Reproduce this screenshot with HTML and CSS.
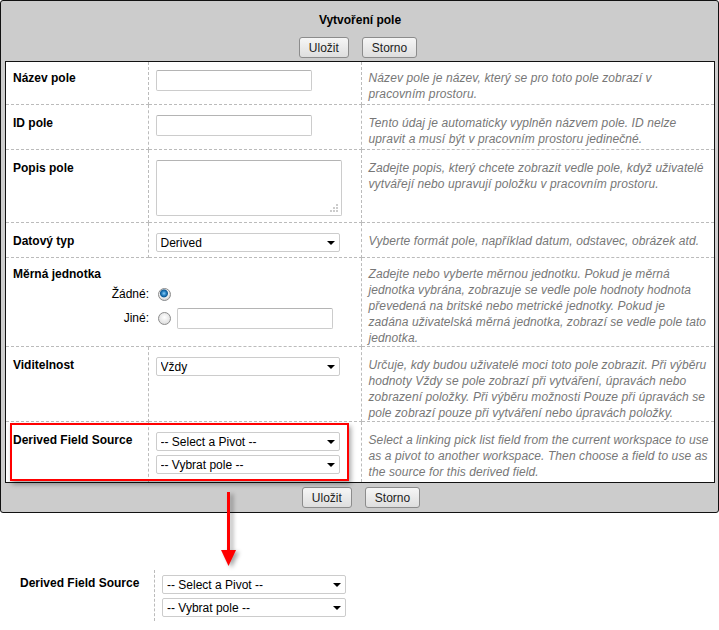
FILE: index.html
```html
<!DOCTYPE html>
<html lang="cs">
<head>
  <meta charset="UTF-8" />
  <title>Vytvoření pole</title>
  <link rel="stylesheet" href="styles.css">
</head>
<body>

  <div class="panel">
    <div class="panel-title">Vytvoření pole</div>
    <div class="actions">
      <button>Uložit</button>
      <button>Storno</button>
    </div>

    <div class="sheet">
      <table class="fields">
        <colgroup>
          <col class="col-label">
          <col class="col-input">
          <col class="col-help">
        </colgroup>
        <tr class="first">
          <td class="label">Název pole</td>
          <td><input type="text" class="text-input"></td>
          <td class="help">Název pole je název, který se pro toto pole zobrazí v<br>pracovním prostoru.</td>
        </tr>
        <tr>
          <td class="label">ID pole</td>
          <td><input type="text" class="text-input"></td>
          <td class="help">Tento údaj je automaticky vyplněn názvem pole. ID nelze<br>upravit a musí být v pracovním prostoru jedinečné.</td>
        </tr>
        <tr>
          <td class="label">Popis pole</td>
          <td><textarea class="text-area"></textarea></td>
          <td class="help">Zadejte popis, který chcete zobrazit vedle pole, když uživatelé<br>vytvářejí nebo upravují položku v pracovním prostoru.</td>
        </tr>
        <tr>
          <td class="label">Datový typ</td>
          <td><span class="select-wrap"><select><option>Derived</option></select></span></td>
          <td class="help">Vyberte formát pole, například datum, odstavec, obrázek atd.</td>
        </tr>
        <tr class="units-row">
          <td colspan="2">
            <div class="label">Měrná jednotka</div>
            <div class="units">
              <span class="unit-name">Žádné:</span>
              <input type="radio" name="unit" class="radio" checked>
              <span></span>
              <span class="unit-name">Jiné:</span>
              <input type="radio" name="unit" class="radio">
              <input type="text" class="text-input">
            </div>
          </td>
          <td class="help">Zadejte nebo vyberte měrnou jednotku. Pokud je měrná<br>jednotka vybrána, zobrazuje se vedle pole hodnoty hodnota<br>převedená na britské nebo metrické jednotky. Pokud je<br>zadána uživatelská měrná jednotka, zobrazí se vedle pole tato<br>jednotka.</td>
        </tr>
        <tr class="tight">
          <td class="label">Viditelnost</td>
          <td><span class="select-wrap"><select><option>Vždy</option></select></span></td>
          <td class="help">Určuje, kdy budou uživatelé moci toto pole zobrazit. Při výběru<br>hodnoty Vždy se pole zobrazí při vytváření, úpravách nebo<br>zobrazení položky. Při výběru možnosti Pouze při úpravách se<br>pole zobrazí pouze při vytváření nebo úpravách položky.</td>
        </tr>
        <tr>
          <td class="label">Derived Field Source</td>
          <td>
            <span class="select-wrap"><select><option>-- Select a Pivot --</option></select></span>
            <span class="select-wrap second"><select><option>-- Vybrat pole --</option></select></span>
          </td>
          <td class="help">Select a linking pick list field from the current workspace to use<br>as a pivot to another workspace. Then choose a field to use as<br>the source for this derived field.</td>
        </tr>
      </table>
    </div>

    <div class="actions bottom">
      <button>Uložit</button>
      <button>Storno</button>
    </div>

    <div class="highlight"></div>

    <svg class="arrow" width="20" height="80" viewBox="0 0 20 80">
      <line x1="7.5" y1="0" x2="7.5" y2="60" stroke="#f00" stroke-width="3" />
      <polygon points="0,58 15,58 7.5,74" fill="#f00" />
    </svg>
  </div>

  <div class="detail">
    <div class="detail-label">Derived Field Source</div>
    <div class="detail-inputs">
      <span class="select-wrap"><select><option>-- Select a Pivot --</option></select></span>
      <span class="select-wrap second"><select><option>-- Vybrat pole --</option></select></span>
    </div>
  </div>

</body>
</html>
```

FILE: styles.css
```css
body {
  margin: 0;
  background: #fff;
  color: #000;
  font-family: "Liberation Sans", Arial, sans-serif;
  font-size: 12px;
  line-height: 16px;
}

.panel {
  position: relative;
  box-sizing: border-box;
  width: 719px;
  background: #cccccc;
  border: 1px solid #111;
  border-radius: 3px;
  padding: 0 3px 4px 4px;
}

.panel-title {
  padding-top: 11px;
  text-align: center;
  font-weight: bold;
}

.actions {
  display: flex;
  justify-content: center;
  gap: 13px;
  margin-top: 9px;
  padding-right: 4px;
}

.actions.bottom {
  margin-top: 4px;
  padding-right: 0;
  padding-left: 2px;
}

.actions button {
  height: 21px;
  padding: 0 9px;
  font-family: "Liberation Sans", Arial, sans-serif;
  font-size: 12px;
  color: #222;
  background: linear-gradient(#f6f6f6, #dedede);
  border: 1px solid #8c8c8c;
  border-radius: 3px;
}

.sheet {
  margin-top: 3px;
  background: #fff;
  border: 1px solid #111;
}

.fields {
  width: 100%;
  border-collapse: collapse;
  table-layout: fixed;
}

.col-label { width: 142px; }
.col-input { width: 213px; }
.col-help { width: 353px; }

.fields td {
  vertical-align: top;
  padding: 10px 0 2px 7px;
  border-right: 1px dashed #bbb;
  border-bottom: 1px dashed #bbb;
}

.fields td:last-child {
  border-right: none;
}

.fields tr:last-child td {
  border-bottom: none;
}

.fields tr.first td {
  padding-top: 8px;
}

.fields tr.units-row td {
  padding-top: 8px;
  padding-bottom: 0;
}

.fields tr.tight td {
  padding-bottom: 0;
}

.label {
  font-weight: bold;
}

.help {
  font-style: italic;
  color: #777;
  letter-spacing: 0.1px;
  white-space: nowrap;
  overflow: hidden;
}

.text-input {
  box-sizing: border-box;
  width: 156px;
  height: 21px;
  margin: 0;
  border: 1px solid #ccc;
  border-top-color: #b4b4b4;
  border-radius: 2px;
  display: block;
}

.text-area {
  box-sizing: border-box;
  display: block;
  width: 186px;
  height: 56px;
  margin: 0 0 4px;
  border: 1px solid #ccc;
  border-top-color: #b4b4b4;
  border-radius: 2px;
  resize: none;
  /* dotted resize grip */
  background-color: #fff;
  background-image:
    radial-gradient(circle, #999 45%, transparent 55%),
    radial-gradient(circle, #999 45%, transparent 55%),
    radial-gradient(circle, #999 45%, transparent 55%),
    radial-gradient(circle, #999 45%, transparent 55%),
    radial-gradient(circle, #999 45%, transparent 55%),
    radial-gradient(circle, #999 45%, transparent 55%);
  background-size: 2px 2px;
  background-repeat: no-repeat;
  background-position:
    right 3px bottom 3px,
    right 6px bottom 3px,
    right 9px bottom 3px,
    right 3px bottom 6px,
    right 6px bottom 6px,
    right 3px bottom 9px;
}

.select-wrap {
  position: relative;
  display: block;
  width: 184px;
  margin-bottom: 3px;
}

.select-wrap.second {
  margin-top: 4px;
  margin-bottom: 0;
}

.select-wrap::after {
  content: "";
  position: absolute;
  right: 5px;
  top: 8px;
  border-left: 4px solid transparent;
  border-right: 4px solid transparent;
  border-top: 4px solid #000;
  pointer-events: none;
}

.select-wrap select {
  -webkit-appearance: none;
  appearance: none;
  box-sizing: border-box;
  display: block;
  width: 184px;
  height: 19px;
  margin: 0;
  padding: 0 0 0 4px;
  font-family: "Liberation Sans", Arial, sans-serif;
  font-size: 12px;
  color: #000;
  background: #fff;
  border: 1px solid #ccc;
  border-radius: 2px;
}

.units {
  display: grid;
  grid-template-columns: 136px 28px 156px;
  grid-auto-rows: 22px;
  row-gap: 2px;
  align-items: center;
  margin-top: 1px;
}

.unit-name {
  text-align: right;
}

.radio {
  -webkit-appearance: none;
  appearance: none;
  width: 13px;
  height: 13px;
  margin: 0 0 0 9px;
  border: 1px solid #8d8d8d;
  border-radius: 50%;
  background: radial-gradient(circle at 50% 40%, #fff 0, #e6e6e6 60%, #cfcfcf 100%);
}

.radio:checked {
  background: radial-gradient(circle at 45% 40%, #8fd0f5 0, #2c86c8 2px, #0d5a94 3.5px, #f2f2f2 4.5px, #d8d8d8 6px);
}

.highlight {
  position: absolute;
  left: 9px;
  top: 422px;
  box-sizing: border-box;
  width: 339px;
  height: 58px;
  border: 2px solid #f00;
  box-shadow: 2px 3px 5px rgba(0, 0, 0, 0.35);
}

.arrow {
  position: absolute;
  left: 220px;
  top: 491px;
  filter: drop-shadow(3px 2px 2px rgba(0, 0, 0, 0.35));
}

.detail {
  display: flex;
  margin: 57px 0 0 13px;
}

.detail-label {
  width: 134px;
  padding: 5px 0 4px 7px;
  font-weight: bold;
  border-right: 1px dashed #bbb;
}

.detail-inputs {
  padding: 5px 0 4px 7px;
}
```
